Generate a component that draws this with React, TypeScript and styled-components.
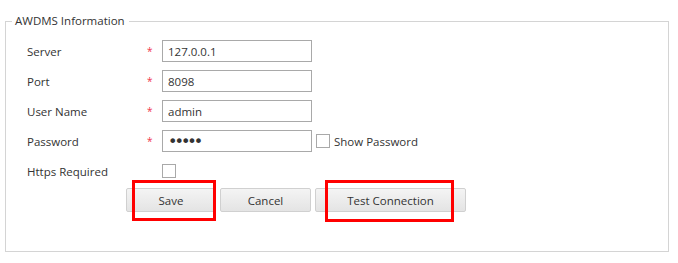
import { Fragment } from 'react';
import styled, { createGlobalStyle } from 'styled-components';

const GlobalStyle = createGlobalStyle`
  body {
    margin: 0;
    background: #fff;
    font-family: "Open Sans", "Noto Sans", sans-serif;
    font-size: 11px;
    color: #333;
  }
`;

const Page = styled.div`
  padding: 13px 9px 0 5px;
`;

const Fieldset = styled.fieldset`
  margin: 0;
  width: 664px;
  height: 239px;
  box-sizing: border-box;
  border: 1px solid #d4d4d4;
  padding: 0 0 0 21px;
`;

const Legend = styled.legend`
  margin-left: -15px;
  padding: 0 4px 0 3px;
  line-height: 16px;
  font-size: 11.5px;
  color: #333;
`;

const FormGrid = styled.div`
  display: grid;
  grid-template-columns: 120px 15px auto;
  grid-auto-rows: 22px;
  row-gap: 8px;
  margin-top: 11px;
  align-items: center;
`;

const Label = styled.label`
  font-size: 11.5px;
  color: #333;
`;

const Required = styled.span`
  color: #f0304a;
  font-size: 10px;
  align-self: start;
  margin-top: 4px;
`;

const Field = styled.div`
  display: flex;
  align-items: center;
  gap: 4px;
`;

const TextInput = styled.input<{ $secret?: boolean }>`
  width: 150px;
  height: 22px;
  box-sizing: border-box;
  border: 1px solid #a9a9a9;
  padding: 0 5px;
  font-family: ${p => (p.$secret ? '"DejaVu Sans", sans-serif' : 'inherit')};
  font-size: ${p => (p.$secret ? '16px' : '11.5px')};
  letter-spacing: ${p => (p.$secret ? '-3px' : '0')};
  color: #333;
  outline: none;
`;

const Box = styled.span<{ $size: number }>`
  display: inline-block;
  width: ${p => p.$size}px;
  height: ${p => p.$size}px;
  box-sizing: border-box;
  border: 1px solid #a9a9a9;
  background: #fff;
`;

const CheckLabel = styled.span`
  font-size: 11.5px;
  color: #333;
`;

const Buttons = styled.div`
  display: flex;
  gap: 4px;
  margin: 6px 0 0 99px;
`;

const Button = styled.button<{ $w: number }>`
  position: relative;
  width: ${p => p.$w}px;
  height: 24px;
  border: 1px solid #d0d0d0;
  border-radius: 2px;
  background: linear-gradient(#f4f4f4, #e4e4e4);
  font-family: inherit;
  font-size: 11.5px;
  color: #333;
  padding: 0;
`;

const Highlight = styled.span<{ $l: number; $w: number; $h: number }>`
  position: absolute;
  left: ${p => p.$l}px;
  top: -9px;
  width: ${p => p.$w}px;
  height: ${p => p.$h}px;
  box-sizing: border-box;
  border: 3px solid #ff0000;
  pointer-events: none;
`;

const rows = [
  { label: 'Server', value: '127.0.0.1' },
  { label: 'Port', value: '8098' },
  { label: 'User Name', value: 'admin' },
];

export default function App() {
  return (
    <Page>
      <GlobalStyle />
      <Fieldset>
        <Legend>AWDMS Information</Legend>
        <FormGrid>
          {rows.map(r => (
            <Fragment key={r.label}>
              <Label>{r.label}</Label>
              <Required>*</Required>
              <Field>
                <TextInput defaultValue={r.value} />
              </Field>
            </Fragment>
          ))}
          <Label>Password</Label>
          <Required>*</Required>
          <Field>
            <TextInput $secret type="password" defaultValue="admin" />
            <Box $size={14} />
            <CheckLabel>Show Password</CheckLabel>
          </Field>
          <Label>Https Required</Label>
          <span />
          <Field>
            <Box $size={14} />
          </Field>
        </FormGrid>
        <Buttons>
          <Button $w={90}>
            Save
            <Highlight $l={5} $w={84} $h={41} />
          </Button>
          <Button $w={91}>Cancel</Button>
          <Button $w={151}>
            Test Connection
            <Highlight $l={9} $w={129} $h={42} />
          </Button>
        </Buttons>
      </Fieldset>
    </Page>
  );
}
